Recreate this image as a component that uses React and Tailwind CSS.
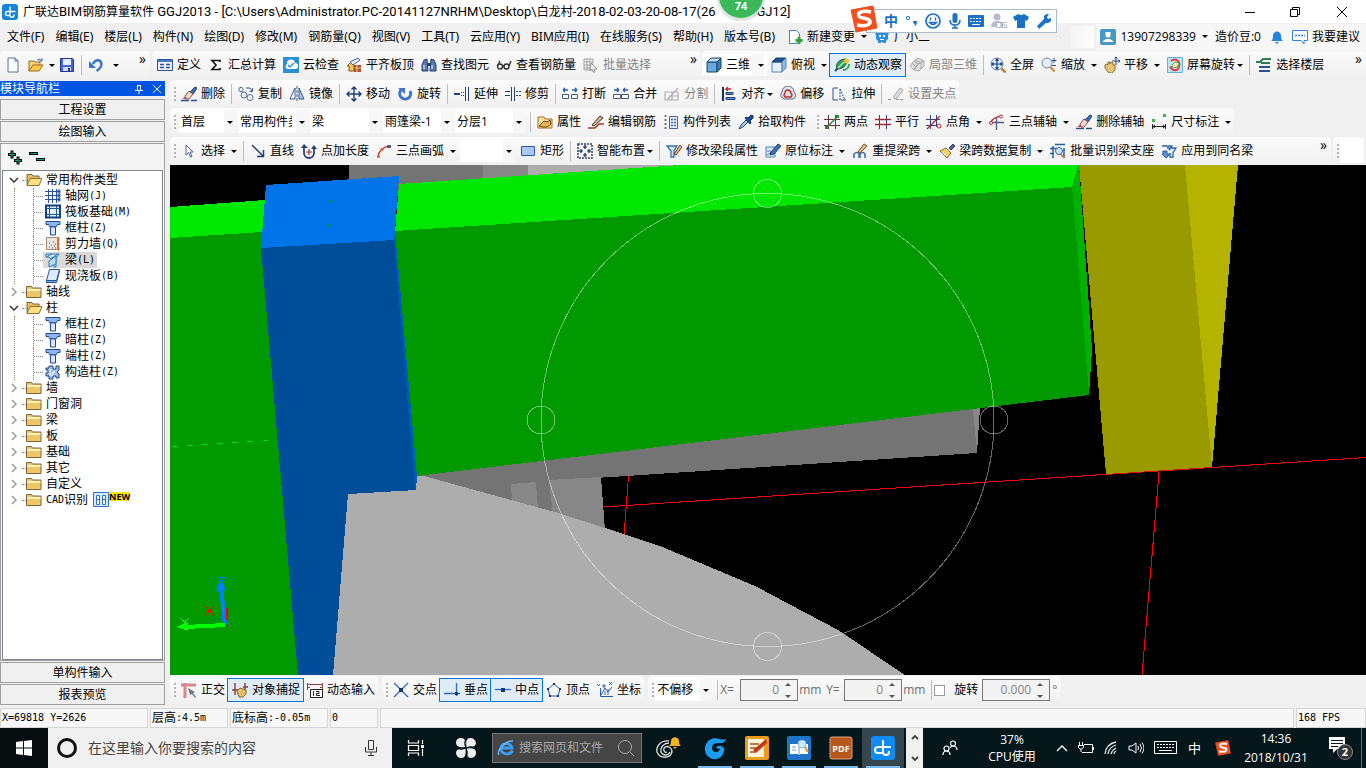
import { useState } from "react";

const navy = "#1f3f7a";

const icons = {
  logo: (
    <>
      <rect width="16" height="16" rx="3" fill="#1685d9" />
      <path d="M8 3v8.500a2 2 0 0 0 4-.5M13 7.500H5.500a2 2 0 0 0 0 4H8" fill="none" stroke="#fff" strokeWidth="1.400" strokeLinecap="round" />
    </>
  ),
  newDoc: <path d="M3 1h7l3 3v11H3zM10 1v3h3" fill="#fbfdff" stroke="#5a7394" />,
  open: (
    <>
      <path d="M1 14V4h5l1 1h5v3" fill="#f5d27a" stroke="#9a6b16" />
      <path d="M1 14 5 8h10l-4 6z" fill="#ffc94d" stroke="#9a6b16" />
      <path d="M9 3q3-2 5 1M14 1v3h-3" fill="none" stroke="#446aa5" />
    </>
  ),
  save: (
    <>
      <path d="M1.500 1.500h12l1 1v12h-13z" fill="#4665d4" stroke="#26358c" />
      <path d="M4 2h8v6H4z" fill="#e9edff" />
      <path d="M4 10h8v4H4z" fill="#cdd6ee" />
      <path d="M9 11h2v3H9z" fill="#26358c" />
    </>
  ),
  undo: (
    <>
      <path d="M5 7C7 2 13 2 13.500 7c0 3-2 5-5 7" fill="none" stroke="#3b74cf" strokeWidth="2.400" />
      <path d="M1 4v7h7z" fill="#3b74cf" />
    </>
  ),
  define: (
    <>
      <path d="M.5 2.500h15v11H.5z" fill="#eaf2ff" stroke="#2e5296" />
      <path d="M1 3h14v2H1z" fill="#4d79c3" />
      <path d="M3 7.500h4M3 10.500h4M9 7.500h4M9 10.500h4" stroke="#2e5296" strokeWidth="1.500" />
    </>
  ),
  sigma: <path d="M12 5V3.500H4L8 8l-4 4.500h8V11" fill="none" stroke="#111" strokeWidth="1.600" />,
  cloud: (
    <>
      <path d="M0 0h16v16H0z" fill="#2b8fd6" />
      <path d="M4 12a3 3 0 0 1 0-5 4 4 0 0 1 8-1 3 3 0 0 1 0 6z" fill="#fff" />
      <path d="m5 8 2 2 4-4" fill="none" stroke="#2b8fd6" strokeWidth="1.500" />
    </>
  ),
  flat: (
    <>
      <path d="M8 8h7v7H8z" fill="#b0512d" />
      <path d="M8 11h7M11 8v7" stroke="#f0c8a8" />
      <path d="m1 9 4-4 3 3v6H3V9z" fill="#f6c64e" stroke="#84551b" />
      <path d="m4 5 8-4 2 2-7 5z" fill="#e8eefb" stroke="#476095" />
    </>
  ),
  binoc: (
    <>
      <path d="m3 3 3-1 1 12H1V8zM13 3l-3-1-1 12h6V8z" fill="#5b7bb0" stroke="#253f74" />
      <path d="M6 6h4v3H6z" fill="#253f74" />
      <path d="M3 8v4M11 8v4" stroke="#fff" />
    </>
  ),
  glasses: (
    <g fill="none" stroke="#333" strokeWidth="1.400">
      <circle cx="4" cy="9.500" r="2.500" />
      <circle cx="10.500" cy="9.500" r="2.500" />
      <path d="M6.500 9h2M2 8l2-4M13 9l2-5" />
    </g>
  ),
  batchSel: (
    <>
      <path d="M1 2h9v11H1zM1 5h9M1 8h9M1 11h9M4 2v11M7 2v11" fill="none" stroke="#a4a4a4" />
      <path d="m8 6 6 6-3 0 1 3-2 0-1-3-2 2z" fill="#f2f2f2" stroke="#9a9a9a" />
    </>
  ),
  cube: (
    <>
      <path d="M1 5h10v10H1z" fill="#69a9dc" stroke="#174270" />
      <path d="m1 5 4-4h10l-4 4z" fill="#b9ddf7" stroke="#174270" />
      <path d="m11 5 4-4v10l-4 4z" fill="#3d7cb4" stroke="#174270" />
    </>
  ),
  topView: (
    <>
      <path d="M1 5h10v10H1z" fill="#e4f0fb" stroke="#5f87b5" />
      <path d="m1 5 4-4h10l-4 4z" fill="#1f4f92" stroke="#174270" />
      <path d="m11 5 4-4v10l-4 4z" fill="#8db8df" stroke="#5f87b5" />
    </>
  ),
  orbit: (
    <>
      <path d="M1 14 4 11" stroke="#164f89" strokeWidth="2" />
      <path d="M3 12C1 6 6 2 12 2c2 5-2 10-9 10z" fill="#2f9e57" stroke="#145c37" />
      <path d="M4 11 10 5" stroke="#bfe6c6" strokeWidth="1.500" />
      <circle cx="12.500" cy="4" r="2.500" fill="#f0c13a" />
      <path d="M9 13c4 0 6-3 6-6" fill="none" stroke="#38a856" strokeWidth="2" />
    </>
  ),
  part3d: (
    <g fill="#e0e0e0" stroke="#a8a8a8">
      <path d="m1 9 4-5 4 3-4 6zM5 4l4-3 6 3-6 3zM9 7l6-3v5l-5 5-5-1z" />
      <path d="m3 6 4 4M7 3l5 3M12 5v7" fill="none" />
    </g>
  ),
  full: (
    <>
      <circle cx="7" cy="7" r="6" fill="#dcebff" stroke="#6a7f9f" />
      <path d="M7 2v10M2 7h10M5.500 3.500 7 2l1.500 1.500M5.500 10.500 7 12l1.500-1.500M3.500 5.500 2 7l1.500 1.500M10.500 5.500 12 7l-1.500 1.500" fill="none" stroke="#173f8e" strokeWidth="1.200" />
      <path d="m11.500 11.500 4 4" stroke="#c0802d" strokeWidth="2.500" />
    </>
  ),
  zoom: (
    <>
      <circle cx="6" cy="6" r="5" fill="#e4eefc" stroke="#6f83a4" />
      <path d="m9.500 10 4 4.500" stroke="#d19138" strokeWidth="2.500" />
      <path d="M13 1v5M10.500 3.500h5M11 8.500h4" stroke="#1f4f9e" />
    </>
  ),
  pan: (
    <>
      <path d="M1 8q2-2 3 0V5h2v2l1-2 2 1v2h2v5l-3 3H5l-4-5z" fill="#e9c572" stroke="#91692a" />
      <path d="M12 0v8M8 4h8M10.500 1.500 12 0l1.500 1.500M14.500 2.500 16 4l-1.500 1.500" fill="none" stroke="#27436f" />
    </>
  ),
  screenRot: (
    <>
      <path d="M.5.5h15v15H.5z" fill="#bfe4f5" stroke="#60b2dd" />
      <path d="M4 4q4-3 7 0t0 8q-4 3-7-1" fill="none" stroke="#e13a32" strokeWidth="1.800" />
      <path d="M2 10 5 9v4z" fill="#e13a32" />
      <path d="m5 8 3-3 4 1-2 4-4 1z" fill="#f7f0c5" stroke="#6da550" />
    </>
  ),
  floors: (
    <g fill="none" strokeWidth="2">
      <path d="M0 5h4l3-3h8M5 6h9" stroke="#2f7a50" />
      <path d="M3 10h11M3 14h11" stroke="#295395" />
    </g>
  ),
  eraser: (
    <>
      <path d="M0 14.500h8M10 14.500h6" stroke="#284f8d" strokeWidth="1.500" />
      <path d="m9 6 5-5 2 1-4 6z" fill="#3870c0" stroke="#27406f" />
      <path d="m4 10 4-5 4 3-4 5H5z" fill="#f5d9c8" stroke="#7e4a54" />
      <path d="m3 11 3 2H2z" fill="#c23b3b" />
    </>
  ),
  copy: (
    <g fill="#edf2fa" stroke="#5b6e90">
      <circle cx="3" cy="3.500" r="2.200" />
      <circle cx="6" cy="9" r="3" />
      <circle cx="12" cy="11.500" r="3" />
      <path d="M8 2h4l2 3M14.500 2v3.500h-3" fill="none" stroke="#38599e" />
    </g>
  ),
  mirror: (
    <>
      <path d="M6 2v11H1z" fill="#fff" stroke="#35598f" />
      <path d="M10 2v11h5z" fill="#a9c7ec" stroke="#35598f" />
      <path d="M8 0v16" stroke="#35598f" strokeDasharray="3 1" />
    </>
  ),
  move: <path d="M8 1v14M1 8h14M5.500 3.500 8 1l2.500 2.500M5.500 12.500 8 15l2.500-2.500M3.500 5.500 1 8l2.500 2.500M12.500 5.500 15 8l-2.500 2.500" fill="none" stroke={navy} strokeWidth="1.400" />,
  rotate: (
    <>
      <path d="M4 4a5.500 5.500 0 1 0 9 1" fill="none" stroke="#3f74cb" strokeWidth="3" />
      <path d="M1 2h7v6z" fill="#3f74cb" />
    </>
  ),
  extend: (
    <>
      <path d="M0 8h6" stroke={navy} strokeWidth="2" />
      <path d="M7 6.500h4M7 9.500h4" stroke={navy} strokeDasharray="1 1" />
      <path d="M11.500 1v14M14.500 1v14" stroke={navy} />
    </>
  ),
  trim: (
    <>
      <path d="M0 5.500h5M0 9.500h5" stroke={navy} />
      <path d="M6.500 1v14M9.500 1v14" stroke={navy} />
      <path d="M11 5.500h5M11 9.500h5" stroke={navy} strokeDasharray="2 1" />
    </>
  ),
  breakIt: (
    <>
      <path d="M1 4h5M1 4l2-2M1 4l2 2M15 4h-5M15 4l-2-2M15 4l-2 2" stroke="#2b5bb0" strokeWidth="1.300" />
      <path d="M.5 8.500h6v4h-6zM9.500 8.500h6v4h-6z" fill="#fff" stroke="#46597d" />
    </>
  ),
  merge: (
    <>
      <path d="M1 4h5M6 4 4 2M6 4 4 6M15 4h-5M10 4l2-2M10 4l2 2" stroke="#2b5bb0" strokeWidth="1.300" />
      <path d="M.5 8.500h7v4h-7zM8.500 8.500h7v4h-7z" fill="#fff" stroke="#46597d" />
    </>
  ),
  split: <path d="M1 6h13v8H1zM3 14 14 2M5 10h10M8 6v8" fill="none" stroke="#b0b0b0" strokeWidth="1.200" />,
  align: (
    <>
      <path d="M2 1v14" stroke="#12315f" strokeWidth="2" />
      <path d="M5 6.500h7v2H5zM5 11.500h9v2H5z" fill="#6b94d4" stroke={navy} />
      <path d="M10 3H5l2-2M5 3l2 2" fill="none" stroke="#c32828" strokeWidth="1.300" />
    </>
  ),
  offset: (
    <>
      <path d="M3 12a3.500 3.500 0 0 1-1-6 6 6 0 0 1 12 0 4 4 0 0 1-1 7H4z" fill="#dce4ee" stroke="#596d8b" />
      <path d="M5 11q-2-2 0-4c0-4 5-4 6 0q2 2 0 4z" fill="#f0d9d9" stroke="#b52f2f" strokeWidth="1.300" />
    </>
  ),
  stretch: (
    <>
      <path d="M7 2H2v12h5" fill="none" stroke="#2d538f" />
      <path d="M9 3v11M9 3l5 11" stroke="#2d538f" strokeDasharray="2 1" />
      <path d="M10 14h5" stroke="#2d538f" />
    </>
  ),
  gripPt: (
    <>
      <path d="M0 13.500h4M8 13.500h7" stroke="#999" strokeDasharray="3 1" />
      <path d="m6 10 6-8 3 2-6 8-3 1z" fill="#ddd" stroke="#aaa" />
    </>
  ),
  props: (
    <>
      <path d="M1 3h6l1 2h7v9H1z" fill="#fce48f" stroke="#a2702a" />
      <path d="m2 12 5-5 3 1 3-2 1 4-4 3H6z" fill="#f1b453" stroke="#644217" />
    </>
  ),
  editBar: (
    <>
      <path d="M0 14h7l4-4h5" fill="none" stroke="#a13a2b" strokeWidth="1.500" />
      <path d="m4 11 8-9 3 2-9 8z" fill="#d9b98b" stroke="#40372b" />
    </>
  ),
  compList: (
    <>
      <path d="M6.500 2.500h8v12h-8z" fill="#e8f0fd" stroke="#3b66aa" />
      <path d="M8 5.500h2M11 5.500h2M8 8.500h2M11 8.500h2M8 11.500h2M11 11.500h2" stroke="#3b66aa" strokeWidth="1.500" />
      <path d="M2.500 1v14" stroke="#777" strokeDasharray="2 2" strokeWidth="2" />
    </>
  ),
  picker: (
    <>
      <path d="m1 15 2-4 5-5 2 2-5 5z" fill="#9ec8ee" stroke="#31506f" />
      <path d="m7 4 1-1 2 1 3-3q3 0 2 3l-3 3 1 2-1 1z" fill="#1c4ba0" stroke="#173360" />
    </>
  ),
  twoPt: (
    <>
      <path d="M4.500 1v14M11.500 1v14M0 5.500h16M0 11.500h16" stroke="#6a2d3b" />
      <path d="M2 14 14 2" stroke="#2b8a3f" strokeWidth="1.500" />
      <path d="M1 12h3v3H1zM12 1h3v3h-3z" fill="#2d8b3e" />
    </>
  ),
  parallel: (
    <>
      <path d="M4.500 1v14M11.500 1v14" stroke="#35407f" />
      <path d="M0 5.500h16M0 10.500h16" stroke="#a32a35" strokeWidth="1.500" />
    </>
  ),
  ptAngle: (
    <>
      <path d="M4.500 1v14M10.500 1v12M0 5.500h14M0 11.500h12" stroke="#35407f" />
      <path d="M1 15 14 2" stroke="#a32a35" strokeWidth="1.300" />
      <circle cx="13" cy="12" r="2" fill="#fff" stroke="#c22" />
    </>
  ),
  auxAxis: (
    <>
      <path d="M1 10Q3 3 13 2" fill="none" stroke="#c02c34" strokeWidth="1.400" />
      <path d="M0 8.500h15M7.500 3v13" stroke="#515a88" strokeWidth="1.300" />
      <circle cx="2" cy="9" r="1.500" fill="#fff" stroke="#c02c34" />
      <circle cx="12" cy="2.500" r="1.500" fill="#fff" stroke="#c02c34" />
    </>
  ),
  dim: (
    <>
      <path d="M1 5h3v3H1zM12 0h3v3h-3z" fill="#45b04d" />
      <path d="M1.500 10v5M14.500 10v5M2 12.500h12M4 11l-2 1.500L4 14M12 11l2 1.500-2 1.500" fill="none" stroke="#222" />
    </>
  ),
  arrow: <path d="M5 2v10l2.500-2.500L9.500 14l1.500-.7-2-4.300H12z" fill="#fff" stroke="#4f658c" />,
  line: <path d="m2 2 11 11M13.500 7v6.500H7" fill="none" stroke={navy} strokeWidth="1.500" />,
  ptLen: (
    <>
      <path d="M3 4v6a5 5 0 0 0 10 0V5" fill="none" stroke="#2a416f" strokeWidth="1.800" />
      <path d="M0 5 3 1l4 4zM10 6l3-4 3 4z" fill="#2a416f" />
      <path d="M8 6v6M5 9h6" stroke="#a33" strokeWidth="1.200" />
    </>
  ),
  arc: (
    <>
      <path d="M2 14Q3 5 13 3" fill="none" stroke="#c2452f" strokeWidth="1.400" />
      <circle cx="2.500" cy="13.500" r="1.500" fill="#d9614b" />
      <circle cx="6" cy="6.500" r="1.500" fill="#d9614b" />
      <path d="M11 2h4v3h-4z" fill="#4a5f8d" />
    </>
  ),
  rect: <path d="M1.500 3.500h13v9h-13z" fill="#a9c8f8" stroke="#2c5ab0" />,
  smart: (
    <>
      <path d="M1 1h14v14H1z" fill="none" stroke="#30415f" strokeWidth="1.500" strokeDasharray="2 1" />
      <path d="M8 2v4M6 4h4M8 10v4M6 12h4M4 6v4M2 8h4M12 6v4M10 8h4" stroke="#12284f" strokeWidth="1.200" />
    </>
  ),
  editSeg: (
    <>
      <path d="M1 3h10L8 8v6H5V8z" fill="#cfe6fa" stroke="#3570ae" strokeWidth="1.300" />
      <path d="m8 11 6-9 2 2-6 8z" fill="#efb66b" stroke="#5e4530" />
    </>
  ),
  inPlace: (
    <>
      <path d="M1 4h9v10H1z" fill="#dbe8f7" stroke="#5480b8" />
      <path d="M2 12 8 8M2 8h4" stroke="#5480b8" />
      <path d="m5 12 1-3 7-8 3 2-7 8z" fill="#3f6fb7" stroke="#204176" />
    </>
  ),
  respan: (
    <>
      <path d="M2 15v-4q3-3 5 0v4M8 15v-4q3-3 5 0v4" fill="none" stroke="#486fad" strokeWidth="1.600" />
      <path d="m6 9 6-8 3 2-7 7z" fill="#e8c07c" stroke="#6b4f31" />
    </>
  ),
  brush: (
    <>
      <path d="m10 5 4-4 2 2-4 4z" fill="#51679b" stroke="#334269" />
      <path d="m1 8 6-3 5 5-4 5z" fill="#f0d46e" stroke="#8a6a23" />
      <path d="m3 9 4 4" stroke="#fff" />
    </>
  ),
  recog: (
    <>
      <path d="M5 1.500h10M0 5.500h7M0 10.500h4" stroke="#27619f" strokeWidth="1.600" />
      <path d="M3 15V3M14 15V5" stroke="#27619f" strokeWidth="1.500" />
      <circle cx="9" cy="8" r="3.500" fill="#cfe4fb" stroke="#37629c" />
      <path d="m11 11 3 4" stroke="#cf7b2c" strokeWidth="2" />
    </>
  ),
  applyTo: (
    <>
      <path d="M1 3h10L8 7M6 5h9l-3 5v4H9v-4" fill="#dbe9fa" stroke="#3367a6" strokeWidth="1.300" />
      <path d="M2 8h4v3h3l-4 4-4-4h1z" fill="#5b92dc" stroke="#2e5b9c" />
    </>
  ),
  ortho: (
    <>
      <path d="M0 3h15M4 1v15" stroke="#d5898b" strokeWidth="3" />
      <path d="m7 6 2 7 2-1 3 4 1-1-3-4 2-1z" fill="#6e7784" />
    </>
  ),
  osnap: (
    <>
      <path d="M3 1v12M13 1v7M0 8h6M11 5h5" stroke="#8a3f3f" strokeWidth="1.400" />
      <path d="m5 9 3-3 3 1 3 1v4l-3 3H7z" fill="#e6c069" stroke="#8e672a" />
    </>
  ),
  dynIn: (
    <>
      <path d="M0 2.500h16M0 5.500h3M13 5.500h3M.5 1v7M15.500 1v7" stroke="#844" />
      <path d="M3.500 7.500h12v8h-12z" fill="#fff" stroke="#222" />
      <path d="M6.500 9v5M9 9.500h3v2H9.500v2H13" fill="none" stroke="#222" />
    </>
  ),
  cross: (
    <>
      <path d="m1 1 14 14M15 1 1 15" stroke="#2b6cc0" strokeWidth="1.300" />
      <path d="M6 6h4v4H6z" fill="#12386f" />
    </>
  ),
  perp: (
    <>
      <path d="M12.500 1v13M0 11.500h16" stroke="#2b6cc0" strokeWidth="1.300" />
      <path d="M11 10h3v3h-3z" fill="#12386f" />
    </>
  ),
  mid: (
    <>
      <path d="M0 7.500h16" stroke="#2b6cc0" strokeWidth="1.300" />
      <path d="M6 6h4v4H6z" fill="#12386f" />
    </>
  ),
  vertex: (
    <>
      <path d="m8 2 6 5-2 7H4L2 7z" fill="none" stroke="#2457a4" />
      <path d="M7 1h2v2H7zM13 6h2v2h-2zM1 6h2v2H1zM3 13h2v2H3zM11 13h2v2h-2z" fill="#12386f" />
    </>
  ),
  coord: (
    <g fill="none" stroke="#2457a4">
      <path d="M3.500 6v8.500H16M4 13l4-7 3 4 4-5" />
      <path d="m12 0 3 3M15 0l-3 3M0 2l1.500 2L3 2M6 3h2v2H6zM11 7v6M8 9v4" strokeWidth=".9" />
    </g>
  ),
  change: (
    <>
      <path d="M2.500 1.500h7l3 3v10h-10z" fill="#fff" stroke="#3d89cf" />
      <path d="M12 8v7M8.500 11.500h7" stroke="#35a237" strokeWidth="3" />
    </>
  ),
  mascot: (
    <>
      <path d="M1 3h3l2 1h4l2-1h3l-1 4v3l-2 2v2h-3v-1H7v1H4v-2l-2-2V7z" fill="#2b8fe0" />
      <path d="M5 6h2v2H5zM9 6h2v2H9z" fill="#fff" />
      <path d="M6 10.500h4" stroke="#fff" />
    </>
  ),
  user: (
    <>
      <rect width="16" height="16" rx="2" fill="#4698c9" />
      <path d="M5.500 3h5v4L9 8.500H7L5.500 7zM3 12l3-2h4l3 2v1H3z" fill="#fff" />
    </>
  ),
  bell: (
    <>
      <path d="M2 12q2-1 2-5c0-6 8-6 8 0q0 4 2 5z" fill="#2281e2" />
      <path d="M6 13h4l-2 2z" fill="#2281e2" />
    </>
  ),
  bubble: (
    <>
      <path d="M.5 1.500h15v10H12V15l-3-3.500H.5z" fill="#fff" stroke="#2f7fe0" />
      <path d="M3 6.500h10" stroke="#2f7fe0" strokeDasharray="2 1" strokeWidth="1.500" />
    </>
  ),
  folderOpen: (
    <>
      <path d="M1 13V2.500h5l1 1.500h6v3" fill="#e8bf5c" stroke="#7a6440" />
      <path d="M1 13.500 4 6.500h12l-3 7z" fill="#ffdf85" stroke="#8f6f34" />
    </>
  ),
  folder: (
    <>
      <path d="M.5 2.500h5l1 1.500h8.500v9.500H.5z" fill="#edc668" stroke="#7a6440" />
      <path d="M1 5h13.500v2H1z" fill="#fff0ba" />
    </>
  ),
  grid: <path d="M3.500 1v14M7.500 1v14M11.500 1v14M0 3.500h15M0 7.500h15M0 11.500h15M13 2h2v3h-2zM13 6h2v3h-2zM13 10h2v3h-2z" fill="none" stroke="#2a51a8" />,
  raft: (
    <>
      <path d="M1 1.500h14v12H1z" fill="#e4f1fa" stroke="#123f7e" strokeWidth="2" />
      <path d="M4.500 4.500h7v6h-7zM4.500 2v11M11.500 2v11M1 4.500h14M1 10.500h14" fill="none" stroke="#1c5b91" />
    </>
  ),
  column: (
    <>
      <path d="M1 1.500h14v3h-2.500L11 7H5L3.500 4.500H1z" fill="#8db5f0" stroke="#214a95" />
      <path d="M5.500 7h5v8h-5z" fill="#d9e8ff" stroke="#214a95" />
    </>
  ),
  wall: (
    <>
      <path d="M1.500 1.500h11v12h-11z" fill="#e9e7e4" stroke="#a58974" />
      <path d="M4 11h1M6 9h1M9 10h1M4 7h1M8 6h1M7 12h1M10 12h1M10 8h1" stroke="#555" />
      <path d="M13.500 1v14M12 4h3M12 8h3M12 12h3" stroke="#d67126" />
    </>
  ),
  beam: (
    <>
      <path d="M1 2h13l-3 4v9H9V7H6L4 5H1z" fill="#c9e5f8" stroke="#2d7fbb" />
      <path d="m1 5 6-3M5 7l8-5M4 15V9l7-5v8z" fill="#b8daf4" stroke="#2d7fbb" />
    </>
  ),
  slab: (
    <>
      <path d="M1.500 12.500v2h10l3-11v-2" fill="#7ea5dd" stroke="#2a54a0" />
      <path d="M4.500 1.500h10l-3 11h-10z" fill="#dcecff" stroke="#2a54a0" />
    </>
  ),
  structCol: (
    <>
      <path d="M4 2h4v3h3V2h3v4l-2 2 2 2v4h-3v-2H8v3H4v-3H1V9h2V6H1V4h3z" fill="#a4c0ea" stroke="#1d417f" />
      <path d="M5 5v6h3V8h2" fill="none" stroke="#fff" />
    </>
  ),
};

function Ico({ name }) {
  return (
    <svg viewBox="0 0 16 16" className="w-4 h-4 shrink-0" aria-hidden="true">
      {icons[name]}
    </svg>
  );
}

const Caret = ({ tight, white }) => (
  <span className={"flex items-center justify-end shrink-0 " + (tight ? "w-2 " : "w-3 ") + (white ? "ml-[2px] h-[22px] bg-[#f7f7f7]" : "")}>
    <span className="border-x-3 border-x-transparent border-t-3 border-t-black" />
  </span>
);

const Sep = () => <span className="w-px h-5 bg-[#bdbdbd] ml-[3px] mr-[2px] shrink-0" />;

const Grip = () => (
  <span className="flex flex-col gap-[2px] pl-1 pr-px shrink-0">
    {[0, 1, 2, 3].map((i) => (
      <span key={i} className="w-[2px] h-[2px] bg-[#b5b5b5]" />
    ))}
  </span>
);

function Tool({ icon, text, caret, tight, active, disabled, white }) {
  return (
    <button
      disabled={disabled}
      className={
        "flex items-center h-[22px] pl-1 pr-[3px] gap-1 shrink-0 whitespace-nowrap " +
        (active ? "outline outline-[#0078d7] bg-[#dfebf5] " : "") +
        (white ? "bg-white " : "") +
        (disabled ? "text-[#858585]" : "")
      }
    >
      {icon && <Ico name={icon} />}
      {text && (
        <span className="flex items-center">
          {text}
          {caret && <Caret tight={tight} white={white} />}
        </span>
      )}
    </button>
  );
}

function Combo({ value, width, label }) {
  return (
    <span className={"relative flex h-[22px] bg-white shrink-0 " + width}>
      <select aria-label={label} defaultValue={value} className="appearance-none w-full pl-[2px] pr-4 bg-transparent overflow-hidden">
        <option>{value}</option>
      </select>
      <span className="absolute right-0 inset-y-0 w-3 bg-[#f7f7f7] flex items-center justify-center pointer-events-none">
        <span className="border-x-3 border-x-transparent border-t-3 border-t-black" />
      </span>
    </span>
  );
}

const Group = ({ children, className = "" }) => (
  <div className={"flex items-center h-7 rounded-sm bg-gradient-to-b from-[#fbfbfb] to-[#f0f0f0] " + className}>{children}</div>
);

const More = () => <button className="ml-auto mr-1 self-start leading-4 text-sm">»</button>;

const menus = ["文件(F)", "编辑(E)", "楼层(L)", "构件(N)", "绘图(D)", "修改(M)", "钢筋量(Q)", "视图(V)", "工具(T)", "云应用(Y)", "BIM应用(I)", "在线服务(S)", "帮助(H)", "版本号(B)"];

const tree = [
  { t: "常用构件类型", open: true, kids: [["grid", "轴网", "(J)"], ["raft", "筏板基础", "(M)"], ["column", "框柱", "(Z)"], ["wall", "剪力墙", "(Q)"], ["beam", "梁", "(L)"], ["slab", "现浇板", "(B)"]] },
  { t: "轴线" },
  { t: "柱", open: true, kids: [["column", "框柱", "(Z)"], ["column", "暗柱", "(Z)"], ["column", "端柱", "(Z)"], ["structCol", "构造柱", "(Z)"]] },
  { t: "墙" },
  { t: "门窗洞" },
  { t: "梁" },
  { t: "板" },
  { t: "基础" },
  { t: "其它" },
  { t: "自定义" },
  { t: "识别", pre: "CAD", isNew: true },
];

const mono = "font-['DejaVu_Sans_Mono','Noto_Sans_CJK_SC',monospace] text-[10px]";

const Latin = ({ children }) => <span className="font-[Roboto,sans-serif] text-[13px]">{children}</span>;

function TitleBar() {
  return (
    <header className="flex items-center h-[23px] bg-white pl-[2px] shrink-0">
      <Ico name="logo" />
      <h1 className="pl-[5px] whitespace-nowrap flex items-center">
        <span>
          广联达<Latin>BIM</Latin>钢筋算量软件<Latin> GGJ2013 - [C:\Users\Administrator.PC-20141127NRHM\Desktop\</Latin>白龙村<Latin>-2018-02-03-20-08-17(26</Latin>
        </span>
        <span className="ml-8"><Latin>GGJ12]</Latin></span>
      </h1>
      <div className="ml-auto flex">
        <button aria-label="最小化" className="w-[45px] flex justify-center">
          <svg viewBox="0 0 12 12" className="w-3 h-3"><path d="M1 6.500h10" stroke="#000" /></svg>
        </button>
        <button aria-label="还原" className="w-[45px] flex justify-center">
          <svg viewBox="0 0 12 12" className="w-3 h-3"><path d="M1.500 3.500h7v7h-7zM3.500 3.500v-2h7v7h-2" fill="none" stroke="#000" /></svg>
        </button>
        <button aria-label="关闭" className="w-[49px] flex justify-center">
          <svg viewBox="0 0 12 12" className="w-3 h-3"><path d="m1 1 10 10M11 1 1 11" stroke="#000" /></svg>
        </button>
      </div>
    </header>
  );
}

function MenuBar() {
  return (
    <nav className="flex items-center h-[27px] pl-[7px] shrink-0 whitespace-nowrap">
      <div className="flex gap-[11px] font-['Noto_Sans','Noto_Sans_CJK_SC',sans-serif]">
        {menus.map((m) => (
          <button key={m}>{m}</button>
        ))}
      </div>
      <div className="flex items-center pl-2">
        <Tool icon="change" text="新建变更" caret />
        <Tool icon="mascot" text="广小二" />
      </div>
      <span className="ml-auto w-6 h-[22px] bg-gradient-to-r from-[#f4f4f4] to-[#fdfdfd] mr-[2px]" />
      <div className="flex items-center h-[26px] bg-[#f7f7f7] pr-[3px]">
        <Tool icon="user" text="13907298339" caret />
        <span className="pl-1 pr-1">造价豆:0</span>
        <Tool icon="bell" />
        <Tool icon="bubble" text="我要建议" />
      </div>
    </nav>
  );
}

function ComponentBar() {
  return (
    <Group>
      <Grip />
      <span className="flex gap-[2px] px-[2px]">
        <Combo label="楼层" value="首层" width="w-[57px]" />
        <Combo label="构件分类" value="常用构件类型" width="w-[70px]" />
        <Combo label="构件类型" value="梁" width="w-[71px]" />
        <Combo label="构件" value="雨篷梁-1" width="w-[70px]" />
        <Combo label="分层" value="分层1" width="w-[70px]" />
      </span>
      <Sep />
      <Tool icon="props" text="属性" />
      <Tool icon="editBar" text="编辑钢筋" />
      <Tool icon="compList" text="构件列表" />
      <Tool icon="picker" text="拾取构件" />
      <span className="w-1" />
      <Grip />
      <Tool icon="twoPt" text="两点" />
      <Tool icon="parallel" text="平行" />
      <Tool icon="ptAngle" text="点角" caret />
      <Tool icon="auxAxis" text="三点辅轴" caret />
      <Tool icon="eraser" text="删除辅轴" />
      <Tool icon="dim" text="尺寸标注" caret />
    </Group>
  );
}

function Sidebar() {
  const [sel, setSel] = useState("梁");
  const bar = "h-[21px] border border-[#a0a0a0] bg-[#f0f0f0] text-center shrink-0";
  return (
    <aside className="w-[165px] mr-[5px] pt-px pb-[3px] flex flex-col shrink-0 bg-[#f0f0f0]">
      <div className="h-[15px] mb-[3px] bg-[#0055e5] text-white flex items-center shrink-0">
        <h2>模块导航栏</h2>
        <button aria-label="固定" className="ml-auto mr-2">
          <svg viewBox="0 0 10 10" className="w-[10px] h-[10px]"><path d="M3.500 1v5M6.500 1v5M3 1.500h4M1 6.500h8M5 7v3" stroke="#fff" /></svg>
        </button>
        <button aria-label="关闭导航栏" className="mr-[3px]">
          <svg viewBox="0 0 10 10" className="w-[10px] h-[10px]"><path d="m1 1 8 8M9 1 1 9" stroke="#fff" /></svg>
        </button>
      </div>
      <button className={bar + " mb-px"}>工程设置</button>
      <button className={bar + " mb-px"}>绘图输入</button>
      <div className="flex-1 min-h-0 flex flex-col border border-[#a0a0a0] bg-[#f4f4f4]">
        <div className="h-[26px] flex items-center gap-[5px] pl-[5px] shrink-0">
          <button aria-label="全部展开">
            <svg viewBox="0 0 18 16" className="w-[18px] h-4"><path d="M2 5.500h8M6 1.500v8M8 11.500h8M12 7.500v8" stroke="#000" strokeWidth="3" /><path d="M3 5.500h6M6 2.500v6M9 11.500h6M12 8.500v6" stroke="#1e9a8c" /></svg>
          </button>
          <button aria-label="全部折叠">
            <svg viewBox="0 0 18 16" className="w-[18px] h-4"><path d="M0 4.500h9M7 10.500h9" stroke="#000" strokeWidth="3" /><path d="M1 4.500h7M8 10.500h7" stroke="#1e9a8c" /></svg>
          </button>
        </div>
        <ul className="flex-1 bg-white border border-[#82878f] pt-px pl-[6px] mx-px leading-4">
          {tree.map((n, i) => (
            <li key={i}>
              <button className="flex items-center h-4">
                <svg viewBox="0 0 10 10" className="w-[10px] h-[10px] shrink-0">
                  <path d={n.open ? "m1 3 4 4 4-4" : "m3 1 4 4-4 4"} fill="none" stroke={n.open ? "#333" : "#9a9a9a"} strokeWidth="1.500" />
                </svg>
                <span className="w-[7px] flex justify-end shrink-0">
                  <span className="w-1 border-t border-dotted border-[#888]" />
                </span>
                <Ico name={n.open ? "folderOpen" : "folder"} />
                <span className="pl-1 flex items-center">
                  {n.pre && <span className={mono}>{n.pre}</span>}
                  {n.t}
                </span>
                {n.isNew && (
                  <>
                    <svg viewBox="0 0 16 16" className="w-4 h-4 ml-[5px]"><path d="M.5.5h15v14H.5z" fill="#d7eafc" stroke="#2f75bd" /><path d="M3.500 3.500h3v9h-3zM9.500 3.500h3v9h-3zM3 7.500h4M9 7.500h4" fill="#fff" stroke="#2f75bd" /></svg>
                    <span className="self-start text-[9px] leading-[9px] font-bold bg-[#ffe600]">NEW</span>
                  </>
                )}
              </button>
              {n.kids && (
                <ul className="ml-[5px] border-l border-dotted border-[#888]">
                  {n.kids.map((k, j) => (
                    <li key={j} className="ml-[18px] flex items-center h-4 border-l border-dotted border-[#888]">
                      <span className="w-[9px] border-t border-dotted border-[#888]" />
                      <button
                        onClick={() => setSel(k[1])}
                        className={"flex items-center h-4 px-[2px] whitespace-nowrap " + (sel === k[1] ? "bg-[#d9d9d9]" : "")}
                      >
                        <Ico name={k[0]} />
                        <span className="pl-1">{k[1]}</span>
                        <span className={mono}>{k[2]}</span>
                      </button>
                    </li>
                  ))}
                </ul>
              )}
            </li>
          ))}
        </ul>
      </div>
      <button className={bar + " mt-px"}>单构件输入</button>
      <button className={bar + " mt-px"}>报表预览</button>
    </aside>
  );
}

function Scene() {
  return (
    <svg viewBox="170 165 1196 510" preserveAspectRatio="xMinYMin slice" shapeRendering="crispEdges" className="flex-1 min-h-0 w-full bg-black" role="img" aria-label="三维视图">
      <path d="M603 507 1366 457.500M628.500 476l-4.500 60M1159 472l-17 203" stroke="#f00" fill="none" />
      <path d="M349 165h134v30H350z" fill="#747474" />
      <path d="M483 165h45v25h-44z" fill="#878787" />
      <path d="M528 165h160v14l-160 10z" fill="#adadad" />
      <path d="M170 207 265 200 262 236 170 240z" fill="#00e800" />
      <path d="M399 184 605 170 680 165H1078L1072 188 395 232z" fill="#00e800" />
      <path d="M170 238 262 232 300 675H170z" fill="#090" />
      <path d="M417 476 980 408 977 453 550 481 555 520 500 500z" fill="#747474" />
      <path d="M973 409 980 408 977 453z" fill="#878787" />
      <path d="M549 480 601 477 605 530 553 516zM511 484 536 482 538 510 512 502z" fill="#878787" />
      <path d="M395 231 1072 187 1089 395 417 476z" fill="#090" />
      <path d="M1072 187 1078 165H1079L1092 350 1089 395z" fill="#00b200" />
      <path d="M1079 165H1185L1212 467 1106 474z" fill="#990" />
      <path d="M1185 165H1238L1212 467z" fill="#b4b400" />
      <path d="M333 675 348 494 416 476H424L500 497 555 512 605 528 660 546 755 586 838 630 905 675z" fill="#adadad" />
      <path d="M261 248 394 240 416 490 348 494 333 675H298z" fill="#004e99" />
      <path d="M399 176 395 231 417 476 416 490H415L394 240z" fill="#005cb4" />
      <path d="M266 185 399 176 394 240 261 248z" fill="#0074e8" />
      <path d="M172 446.500 272 440.500" stroke="#00e800" strokeDasharray="6 9" />
      <path d="M330.500 200 328.500 230" stroke="#009e20" strokeDasharray="3 9" />
      <g fill="none" stroke="#fff" strokeOpacity=".42">
        <circle cx="767.500" cy="420" r="226.500" />
        <circle cx="767.500" cy="193.500" r="14" />
        <circle cx="541" cy="420" r="14" />
        <circle cx="994" cy="420" r="14" />
        <circle cx="767.500" cy="646.500" r="14" />
      </g>
      <path d="M226.500 608v18" stroke="#f00" strokeWidth="2" />
      <path d="m205 606 9 10M214 606l-9 10" fill="none" stroke="#f00" />
      <path d="m225 625-4-38" stroke="#0080ff" strokeWidth="4" />
      <path d="M216 591 220.500 579 226 590z" fill="#0080ff" />
      <path d="M217 577.500h8l-7 9" fill="none" stroke="#0080ff" />
      <path d="m225 625-40 2" stroke="#0f0" strokeWidth="4" />
      <path d="m176 627 12-5v9z" fill="#0f0" />
      <path d="m180 618 4.500 4 4.500-4M184.500 622v3" fill="none" stroke="#0f0" />
    </svg>
  );
}

function NumBox({ label, value, width }) {
  return (
    <span className={"flex h-[22px] border border-[#777] bg-[#f3f3f3] shrink-0 " + width}>
      <input aria-label={label} defaultValue={value} className="w-full min-w-0 text-right bg-transparent text-[#858585]" />
      <span className="w-[18px] flex flex-col items-center justify-center gap-[9px] shrink-0">
        <span className="border-x-3 border-x-transparent border-b-3 border-b-[#555]" />
        <span className="border-x-3 border-x-transparent border-t-3 border-t-[#555]" />
      </span>
    </span>
  );
}

function SnapBar() {
  return (
    <div className="flex items-center h-[33px] pb-[3px] shrink-0">
      <Group>
        <Grip />
        <Tool icon="ortho" text="正交" />
        <Tool icon="osnap" text="对象捕捉" active />
        <Tool icon="dynIn" text="动态输入" />
      </Group>
      <Group className="ml-1">
        <Grip />
        <Tool icon="cross" text="交点" />
        <Tool icon="perp" text="垂点" active />
        <Tool icon="mid" text="中点" active />
        <Tool icon="vertex" text="顶点" />
        <Tool icon="coord" text="坐标" />
      </Group>
      <Group className="ml-1 text-[#707070]">
        <Grip />
        <span className="text-black flex"><Combo label="偏移方式" value="不偏移" width="w-[57px]" /></span>
        <span className="w-[2px]" />
        <Sep />
        <span className="w-5">X=</span>
        <NumBox label="X" value="0" width="w-[58px]" />
        <span className="w-7 pl-px">mm</span>
        <span className="w-[18px]">Y=</span>
        <NumBox label="Y" value="0" width="w-[58px]" />
        <span className="w-[26px] pl-px">mm</span>
        <Sep />
        <label className="flex items-center gap-[9px] pr-1 text-black">
          <input type="checkbox" className="appearance-none w-[11px] h-[11px] border border-[#999] bg-white" />
          旋转
        </label>
        <NumBox label="旋转角度" value="0.000" width="w-[68px]" />
        <span className="pl-[2px] pr-1">°</span>
      </Group>
    </div>
  );
}

const Cell = ({ width, children }) => (
  <span className={"h-5 border border-[#d5d5d5] bg-[#f7f7f7] flex items-center pl-px whitespace-pre " + width}>{children}</span>
);

function StatusBar() {
  return (
    <footer className="flex gap-[2px] h-5 shrink-0">
      <Cell width="w-[148px]"><span className={mono}>X=69818 Y=2626</span></Cell>
      <Cell width="w-[78px]">层高<span className={mono}>:4.5m</span></Cell>
      <Cell width="w-[98px]">底标高<span className={mono}>:-0.05m</span></Cell>
      <Cell width="w-12"><span className={mono}>0</span></Cell>
      <Cell width="flex-1" />
      <Cell width="w-[70px]"><span className={mono}>168 FPS</span></Cell>
    </footer>
  );
}

const apps = [
  {
    name: "浏览器",
    art: <path d="M23 3q-1 5-8 4-6 0-6 5 0 4 4 4 3 0 4-3l-4-1q1-3 5-2 4 1 3 5c-1 6-6 9-11 8S1 17 2 11C4 3 11 1 16 3q4 1 7 0z" fill="#1c9cf0" />,
  },
  {
    name: "便笺",
    art: (
      <>
        <rect x="0" y="0" width="24" height="24" rx="2" fill="#f09a1c" />
        <path d="M3 3h16v18H3z" fill="#fff6da" />
        <path d="M5 8h9M5 12h9M5 16h6" stroke="#a4541a" strokeWidth="1.500" />
        <path d="m8 14 13-11 1 4-11 10z" fill="#c23a1e" />
      </>
    ),
  },
  {
    name: "资料查询",
    art: (
      <>
        <rect x="0" y="0" width="24" height="24" rx="2" fill="#1d74c9" />
        <path d="M3 8h8l1 1 1-1h8v10h-8l-1 1-1-1H3z" fill="#fff" />
        <path d="M5 11h4M5 14h4M12 9v9" stroke="#6aa0d4" />
        <circle cx="15" cy="8" r="4" fill="#cfeafc" stroke="#88b4d8" />
        <path d="m18 11 3 5" stroke="#d9913d" strokeWidth="2" />
      </>
    ),
  },
  {
    name: "PDF",
    art: (
      <>
        <rect x="1" y="1" width="22" height="22" rx="2" fill="#b9581d" stroke="#d8a27c" />
        <text x="12" y="16" textAnchor="middle" fontSize="9" fontWeight="700" fill="#fff">PDF</text>
      </>
    ),
  },
  {
    name: "广联达",
    active: true,
    art: (
      <>
        <rect x="0" y="0" width="24" height="24" rx="3" fill="#0f8bf2" />
        <path d="M12 5v11a3 3 0 0 0 6 0M19 11H7a3 3 0 0 0 0 6h5" fill="none" stroke="#fff" strokeWidth="2" strokeLinecap="round" />
      </>
    ),
  },
];

const SLogo = ({ className }) => (
  <svg viewBox="0 0 28 28" className={className}>
    <path d="m1 5 22-4 4 22-21 4z" fill="#f0501e" stroke="#f0501e" strokeLinejoin="round" />
    <path d="M21 7q-8-2-12 1-2 4 4 5 8 1 7 5-3 4-13 2" fill="none" stroke="#fff" strokeWidth="3.500" />
  </svg>
);

function TaskBar() {
  return (
    <div className="flex h-10 bg-[#06171c] text-white shrink-0">
      <button aria-label="开始" className="w-12 flex items-center justify-center bg-[#070c0e]">
        <svg viewBox="0 0 16 16" className="w-4 h-4"><path d="m0 2 7-1v6.500H0zM8 1l8-1v7.500H8zM0 8.500h7V15l-7-1zM8 8.500h8V16l-8-1z" fill="#fff" /></svg>
      </button>
      <label className="w-[344px] bg-[#f0f0f0] flex items-center px-2 text-[#555]">
        <svg viewBox="0 0 22 22" className="w-[22px] h-[22px]"><circle cx="11" cy="11" r="8.500" fill="none" stroke="#111" strokeWidth="3" /></svg>
        <input aria-label="搜索" placeholder="在这里输入你要搜索的内容" className="flex-1 ml-[10px] text-sm placeholder:text-[#444] bg-transparent" />
        <svg viewBox="0 0 14 18" className="w-[14px] h-[18px] mr-[6px]"><path d="M4.500 1.500h5v9h-5zM1.500 8v5h11V8M7 13v4M4 16.500h6" fill="none" stroke="#333" /></svg>
      </label>
      <button aria-label="任务视图" className="w-12 flex items-center justify-center">
        <svg viewBox="0 0 18 16" className="w-[18px] h-4"><path d="M1.500 0v3h10V0M1.500 16v-3h10v3M1.500 5.500h10v5h-10zM15.500 0v4M15.500 9v7" fill="none" stroke="#fff" strokeWidth="1.200" /><path d="M14 5h3v3h-3z" fill="#fff" /></svg>
      </button>
      <button aria-label="导航" className="w-[52px] flex items-center justify-center">
        <svg viewBox="0 0 22 22" className="w-[22px] h-[22px]"><g fill="#eee"><path d="M10 10Q1 11 1 6t5-5q6 0 4 9z" /><path d="M11.500 10Q10 1 15 1t6 5q0 5-9.500 4z" /><path d="M12 11.500q9-1 9 4t-5 5.500q-5 0-4-9.500z" /><path d="M10.500 12q1 9-4 9T1 16q0-5 9.500-4z" /></g><path d="M11 1q-3 6 0 10t0 10M1 11q6 3 10 0t10 0" fill="none" stroke="#06171c" /></svg>
      </button>
      <label className="w-[150px] h-[30px] my-auto border border-[#777] bg-[#454545] flex items-center px-1">
        <svg viewBox="0 0 18 18" className="w-[18px] h-[18px] shrink-0"><path d="M15.500 11.500C13 16.500 4 16 4 9.500S14 3 15 9H5" fill="none" stroke="#3e9df2" strokeWidth="2.800" /><path d="M2 16C-1 12 9 1 16 2" fill="none" stroke="#67b5f7" strokeWidth="1.500" /></svg>
        <input aria-label="搜索网页和文件" placeholder="搜索网页和文件" className="w-full min-w-0 ml-1 placeholder:text-[#aaa] bg-transparent" />
        <svg viewBox="0 0 18 18" className="w-[18px] h-[18px] mr-[2px] shrink-0"><circle cx="8" cy="8" r="6.500" fill="none" stroke="#aaa" /><path d="m13 13 4 4" stroke="#aaa" /></svg>
      </label>
      <button aria-label="提醒" className="w-[52px] flex items-center justify-center">
        <svg viewBox="0 0 28 28" className="w-7 h-7"><path d="M15 7C6 6 2 13 3 18c3 7 13 7 15 0 0-5-5-7-8-4-1 3 1 5 3 4M15 9c-5 0-9 4-8 9 2 4 7 4 9 0" fill="none" stroke="#ddd" strokeWidth="1.300" /><path d="M15 12q2-1 2-5c0-5 8-5 8 0q0 4 2 5zM19 13h4l-2 2z" fill="#f2b51c" /></svg>
      </button>
      <div className="flex">
        {apps.map((a) => (
          <button
            key={a.name}
            aria-label={a.name}
            className={"w-[42px] flex items-center justify-center relative " + (a.active ? "bg-[#35464e]" : "")}
          >
            <svg viewBox="0 0 24 24" className="w-6 h-6">{a.art}</svg>
            <span className="absolute bottom-0 inset-x-1 h-[2px] bg-[#76b9ed]" />
          </button>
        ))}
      </div>
      <div className="w-[17px] ml-[2px] bg-[#f0f0f0] flex flex-col items-center justify-between py-[6px]">
        <svg viewBox="0 0 8 6" className="w-2 h-[6px]"><path d="m1 5 3-3 3 3" fill="none" stroke="#444" strokeWidth="1.800" /></svg>
        <svg viewBox="0 0 8 6" className="w-2 h-[6px]"><path d="m1 1 3 3 3-3" fill="none" stroke="#444" strokeWidth="1.800" /></svg>
      </div>
      <div className="ml-auto flex items-center">
        <svg viewBox="0 0 16 16" className="w-4 h-4 mr-[30px]"><g fill="none" stroke="#fff" strokeWidth="1.200"><circle cx="11" cy="3.500" r="2.500" /><circle cx="4.500" cy="8.500" r="2.500" /><path d="M1 15q0-4 3.500-4T8 15M8 8q1-2 3-2 4 0 4 4" /></g></svg>
        <div className="w-12 text-center leading-[17px] whitespace-nowrap">37%<br />CPU使用</div>
        <div className="flex items-center gap-[10px] pl-5 pr-3">
          <svg viewBox="0 0 12 8" className="w-3 h-2"><path d="m1 7 5-5 5 5" fill="none" stroke="#fff" strokeWidth="1.300" /></svg>
          <svg viewBox="0 0 16 14" className="w-4 h-[14px]"><path d="M6 3.500h8.500v8H4M15.500 6v3M1.500 1v3M4.500 1v3M.5 4.500h5v2l-2 1.500H2L.5 6.500zM3 8v3" fill="none" stroke="#fff" /></svg>
          <svg viewBox="0 0 14 14" className="w-[14px] h-[14px]"><g fill="none" stroke="#ddd" strokeWidth="1.300"><path d="M1 13Q2 3 12 1M4 13q1-7 8-9M7 13q1-4 5-6M10 13q0-2 2-3" /></g></svg>
          <svg viewBox="0 0 16 14" className="w-4 h-[14px]"><path d="M1 5h3l4-3v10L4 9H1zM10 5q1 2 0 4M12 3q3 4 0 8M14 1.500q4 5.500 0 11" fill="none" stroke="#fff" /></svg>
          <svg viewBox="0 0 24 14" className="w-6 h-[14px]"><path d="M.5.5h22v12H.5z" fill="none" stroke="#fff" /><path d="M3 3.500h18M3 6.500h18" stroke="#fff" strokeDasharray="2 1" /><path d="M5 9.500h13" stroke="#fff" /></svg>
          <span className="text-[13px] pr-1">中</span>
          <SLogo className="w-4 h-4" />
        </div>
        <time className="w-[66px] text-center leading-[19px]">14:36<br />2018/10/31</time>
        <button aria-label="通知" className="ml-[19px] mr-[7px]">
          <svg viewBox="0 0 26 24" className="w-[26px] h-6">
            <path d="M1 1h16v12H9l-4 4v-4H1z" fill="#fff" />
            <path d="M3 4.500h12M3 7.500h12M3 10.500h7" stroke="#06171c" />
            <circle cx="17" cy="16" r="7.500" fill="#333" stroke="#888" />
            <text x="17" y="20" textAnchor="middle" fontSize="11" fontWeight="700" fill="#fff">2</text>
          </svg>
        </button>
        <span className="w-px h-10 bg-[#6a7478] mr-1" />
      </div>
    </div>
  );
}

function ImeBar() {
  return (
    <div className="absolute top-[5px] left-[850px] flex items-center">
      <SLogo className="w-7 h-7 z-10" />
      <div className="-ml-3 w-[191px] h-6 mt-1 bg-white border border-[#a9bdcc] flex items-center justify-between pl-[17px] pr-1 text-[#1b72c4]">
        <span className="text-sm font-bold">中</span>
        <svg viewBox="0 0 14 14" className="w-[14px] h-[14px]"><circle cx="3" cy="4" r="1.700" fill="none" stroke="currentColor" /><path d="M8 7h4q0 5-3 5 1-1 1-2-2 0-2-3z" fill="currentColor" /></svg>
        <svg viewBox="0 0 16 16" className="w-4 h-4"><circle cx="8" cy="8" r="7" fill="none" stroke="currentColor" strokeWidth="1.700" /><path d="M5.500 4.500v3M10.500 4.500v3M4.500 9.500q3.500 4 7 0z" fill="none" stroke="currentColor" strokeWidth="1.400" /></svg>
        <svg viewBox="0 0 14 16" className="w-[14px] h-4"><rect x="4.500" y="0" width="5" height="10" rx="2.500" fill="currentColor" /><path d="M2 7q0 5 5 5t5-5M7 12v3M4 15h6" fill="none" stroke="currentColor" strokeWidth="1.600" /></svg>
        <svg viewBox="0 0 16 14" className="w-4 h-[14px]"><rect y="1" width="16" height="12" rx="1" fill="currentColor" /><path d="M2 4.500h12M2 7.500h12" stroke="#fff" strokeDasharray="2 1" /><path d="M4 10.500h8" stroke="#fff" /></svg>
        <svg viewBox="0 0 16 16" className="w-4 h-4"><circle cx="6" cy="4" r="3.500" fill="#b3bdd0" /><path d="M0 14q0-6 6-6t5 2v4z" fill="#b3bdd0" /><path d="M5.500 9.500H10v5H5.500zM11 9.500h4.500M11.500 9.500v5h4v-2.500h-4" fill="#fff" stroke="#aab5ca" /></svg>
        <svg viewBox="0 0 16 14" className="w-4 h-[14px]"><path d="M5 0q3 2 6 0l5 3-2 4-2-1v8H4V6L2 7 0 3z" fill="currentColor" /></svg>
        <svg viewBox="0 0 16 16" className="w-4 h-4"><path d="m1 13 7-7q-1-4 3-5l2 0-2 3 1 2 3-1q1 4-3 5l-2 0-7 6z" fill="currentColor" /></svg>
      </div>
    </div>
  );
}

export default function App() {
  return (
    <div className="relative h-screen flex flex-col overflow-hidden bg-[#f0f0f0] text-black text-xs leading-4 font-['Open_Sans','Noto_Sans_CJK_SC',sans-serif]">
      <TitleBar />
      <MenuBar />

      <div className="flex shrink-0 h-[30px] pt-px">
        <Group className="w-[150px] pl-px">
          <Tool icon="newDoc" />
          <span className="flex items-center"><Tool icon="open" /><Caret tight /></span>
          <Tool icon="save" />
          <Sep />
          <Tool icon="undo" />
          <Caret />
          <More />
        </Group>
        <Group className="w-[549px] ml-[2px] pl-px">
          <Tool icon="define" text="定义" />
          <Tool icon="sigma" text="汇总计算" />
          <Tool icon="cloud" text="云检查" />
          <Tool icon="flat" text="平齐板顶" />
          <Tool icon="binoc" text="查找图元" />
          <Tool icon="glasses" text="查看钢筋量" />
          <Tool icon="batchSel" text="批量选择" disabled />
          <More />
        </Group>
        <Group className="flex-1 min-w-0 ml-px">
          <Tool icon="cube" text="三维" caret white />
          <Tool icon="topView" text="俯视" caret />
          <Tool icon="orbit" text="动态观察" active />
          <Tool icon="part3d" text="局部三维" disabled />
          <Sep />
          <Tool icon="full" text="全屏" />
          <Tool icon="zoom" text="缩放" caret />
          <Tool icon="pan" text="平移" caret />
          <Tool icon="screenRot" text="屏幕旋转" caret tight />
          <Sep />
          <Tool icon="floors" text="选择楼层" />
          <More />
        </Group>
      </div>

      <div className="flex flex-1 min-h-0">
        <Sidebar />
        <main className="flex-1 min-w-0 flex flex-col">
          <div className="flex shrink-0">
            <Group>
              <Grip />
              <Tool icon="eraser" text="删除" />
              <Sep />
              <Tool icon="copy" text="复制" />
              <Tool icon="mirror" text="镜像" />
              <Sep />
              <Tool icon="move" text="移动" />
              <Tool icon="rotate" text="旋转" />
              <Sep />
              <Tool icon="extend" text="延伸" />
              <Tool icon="trim" text="修剪" />
              <Sep />
              <Tool icon="breakIt" text="打断" />
              <Tool icon="merge" text="合并" />
              <Tool icon="split" text="分割" disabled />
              <Sep />
              <Tool icon="align" text="对齐" caret tight />
              <Tool icon="offset" text="偏移" />
              <Tool icon="stretch" text="拉伸" />
              <Sep />
              <Tool icon="gripPt" text="设置夹点" disabled />
            </Group>
          </div>
          <div className="flex shrink-0">
            <ComponentBar />
          </div>
          <div className="flex shrink-0 mt-px">
            <Group className="flex-1 min-w-0">
              <Grip />
              <Tool icon="arrow" text="选择" caret />
              <Sep />
              <Tool icon="line" text="直线" />
              <Tool icon="ptLen" text="点加长度" />
              <Tool icon="arc" text="三点画弧" caret />
              <Combo label="画法" value="" width="w-[55px] mx-px" />
              <Tool icon="rect" text="矩形" />
              <Sep />
              <Tool icon="smart" text="智能布置" caret tight />
              <Sep />
              <Tool icon="editSeg" text="修改梁段属性" />
              <Tool icon="inPlace" text="原位标注" caret />
              <Tool icon="respan" text="重提梁跨" caret />
              <Tool icon="brush" text="梁跨数据复制" caret />
              <Tool icon="recog" text="批量识别梁支座" />
              <Tool icon="applyTo" text="应用到同名梁" />
              <More />
            </Group>
            <Group className="ml-[2px] mr-[2px]">
              <Grip />
              <span className="w-6 h-6 bg-white" />
            </Group>
          </div>
          <Scene />
          <SnapBar />
        </main>
      </div>

      <StatusBar />
      <TaskBar />

      <ImeBar />
      <div className="absolute -top-[28px] left-[717px] w-12 h-12 rounded-full bg-[#3cb85a] border-2 border-[#d8e8dc] shadow flex items-end justify-center pb-1 text-white font-bold text-[11px]">
        74
      </div>
    </div>
  );
}
